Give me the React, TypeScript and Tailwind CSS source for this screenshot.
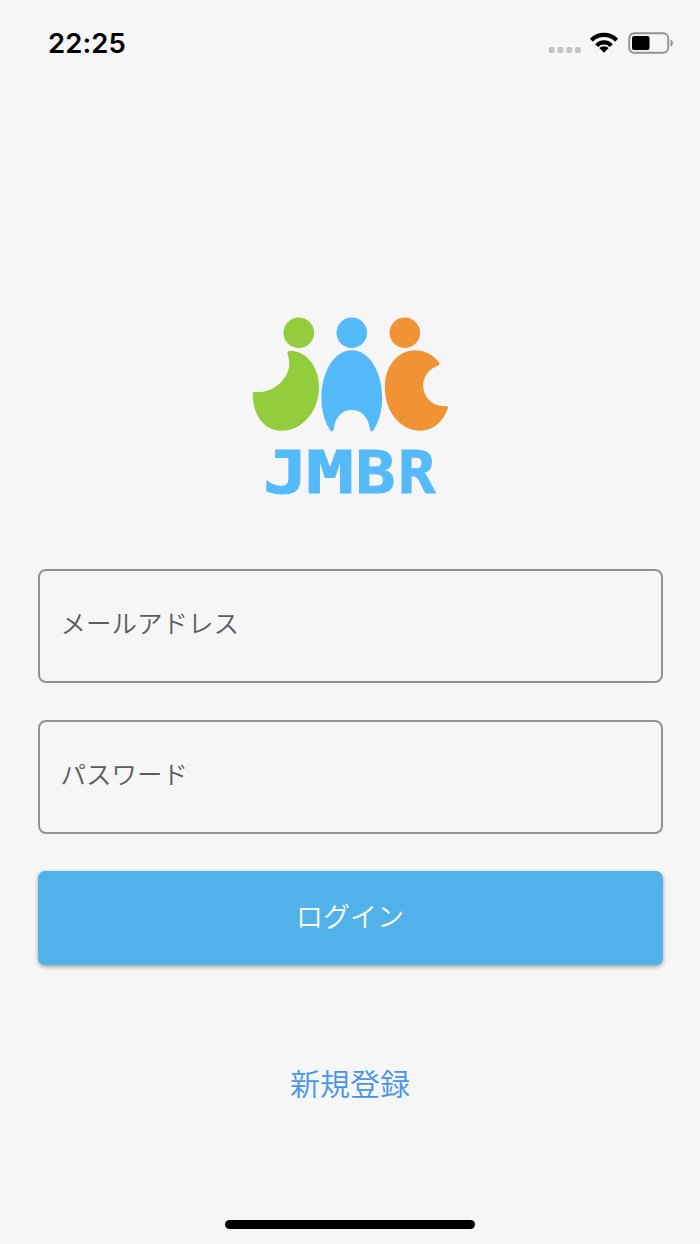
import { useState } from 'react';

const fieldClass =
  'block h-[114px] w-full rounded-[8px] border-2 border-[#929292] bg-transparent pb-[9px] pl-[21px] pr-5 text-[25.5px] font-[350] text-[#222] outline-none placeholder:text-[#5c5c5c] placeholder:opacity-100';

function StatusBar() {
  return (
    <header className="flex h-[86px] items-center justify-between pl-[48px] pr-[26px]">
      <span className="pt-[2px] font-[Inter,sans-serif] text-[27.5px] font-semibold leading-none tracking-[0.1px] text-black">22:25</span>
      <div className="flex items-center">
        <svg width="33" height="30" viewBox="0 0 33 30" fill="#c4c4c4">
          <rect x="0.7" y="19" width="6" height="6" rx="1.8" />
          <rect x="9.5" y="19" width="6" height="6" rx="1.8" />
          <rect x="18.2" y="19" width="6" height="6" rx="1.8" />
          <rect x="26.9" y="19" width="6" height="6" rx="1.8" />
        </svg>
        <svg className="ml-[9px]" width="28" height="22" viewBox="0 0 28 22">
          <g fill="none" stroke="#000" strokeWidth="4.2">
            <path d="M1.4 8.2C8.2 1.2 19.8 1.2 26.6 8.2" />
            <path d="M6.7 13.6C10.6 9.4 17.4 9.4 21.3 13.6" />
          </g>
          <path d="M14 14.2c1.9 0 3.5.7 4.6 1.9L14 20.8l-4.6-4.7c1.1-1.2 2.7-1.9 4.6-1.9Z" />
        </svg>
        <svg className="ml-[10px]" width="46" height="22" viewBox="0 0 46 22">
          <rect x="1.2" y="1.2" width="39" height="19.6" rx="5" fill="none" stroke="#929292" strokeWidth="1.9" />
          <rect x="4" y="4" width="17.5" height="14" rx="2" />
          <path d="M42.5 7.4c3.2 1.3 3.2 5.9 0 7.2Z" fill="#929292" />
        </svg>
      </div>
    </header>
  );
}

function Logo() {
  return (
    <svg width="200" height="200" viewBox="0 0 200 200" role="img" aria-label="JMBR" className="overflow-visible">
      <g fill="#93cc3d">
        <circle cx="48.8" cy="17.7" r="15.3" />
        <path d="M39.7 35.7C56.5 35.7 69 51.5 69 72.5C69 97 51.5 115.8 31.7 115.8C14 115.8 2.7 100 2.7 78.3Q2.7 76.6 4.2 76.7C23 79.8 42.5 62 38.8 44Q38.4 41 37.6 38.5Q37.1 35.7 39.7 35.7Z" />
      </g>
      <g fill="#55baf9">
        <circle cx="101.8" cy="17.7" r="15.3" />
        <path d="M101.8 35.2C120 35.2 132.2 58 132.2 83C132.2 96 128.8 107 123.6 115Q122.8 116.2 121.4 116.2Q120.2 116 119.8 114C118.6 102.5 111.8 95 101.8 95C91.8 95 85 102.5 83.8 114Q83.4 116 82.2 116.2Q80.8 116.2 80 115C74.8 107 71.4 96 71.4 83C71.4 58 83.6 35.2 101.8 35.2Z" />
      </g>
      <g fill="#f09335">
        <circle cx="154.8" cy="17.7" r="15.3" />
        <path d="M165 35.3C175 35.3 183.2 40 189.2 47.6Q190.4 49.3 188.6 50.2C179.2 53.3 173.2 61.3 173.2 70.7C173.2 82 182.5 91.8 196.1 91.1Q198.4 91.1 197.8 93.3C193.2 107 182.5 115.8 170.3 115.8C150 115.8 134.8 96.4 134.8 72.3C134.8 51.5 147.6 35.3 165 35.3Z" />
      </g>
      <g className="font-['DejaVu_Sans_Mono',monospace] font-bold" fill="#55baf9" stroke="#55baf9" strokeWidth="1" fontSize="59">
        <text x="13" y="178" textLength="45" lengthAdjust="spacingAndGlyphs">J</text>
        <text x="56" y="178" textLength="48" lengthAdjust="spacingAndGlyphs">M</text>
        <text x="105.5" y="178" textLength="40" lengthAdjust="spacingAndGlyphs">B</text>
        <text x="148" y="178" textLength="37.5" lengthAdjust="spacingAndGlyphs">R</text>
      </g>
    </svg>
  );
}

export default function App() {
  const [email, setEmail] = useState('');
  const [password, setPassword] = useState('');

  return (
    <main className="flex h-[1244px] w-full flex-col bg-[#f6f6f6] font-['Noto_Sans_CJK_JP',sans-serif]">
      <StatusBar />
      <div className="mt-[229px] flex justify-center">
        <Logo />
      </div>
      <form className="mt-[54px] flex flex-col px-[37.5px]" onSubmit={(event) => event.preventDefault()}>
        <input
          type="email"
          value={email}
          onChange={(event) => setEmail(event.target.value)}
          placeholder="メールアドレス"
          className={fieldClass}
        />
        <input
          type="password"
          value={password}
          onChange={(event) => setPassword(event.target.value)}
          placeholder="パスワード"
          className={`${fieldClass} mt-[37px]`}
        />
        <button
          type="submit"
          className="mt-[37px] h-[94px] w-full rounded-[7px] bg-[#51b1e9] pb-[4px] text-[27px] font-[350] text-white shadow-[0_2px_4px_rgba(0,0,0,0.35)]"
        >
          ログイン
        </button>
      </form>
      <a href="#register" className="mt-[95px] self-center text-[30px] font-[350] leading-[44px] text-[#4795ea]">
        新規登録
      </a>
      <div className="mb-[15px] mt-auto h-[9px] w-[250px] self-center rounded-full bg-black" />
    </main>
  );
}
